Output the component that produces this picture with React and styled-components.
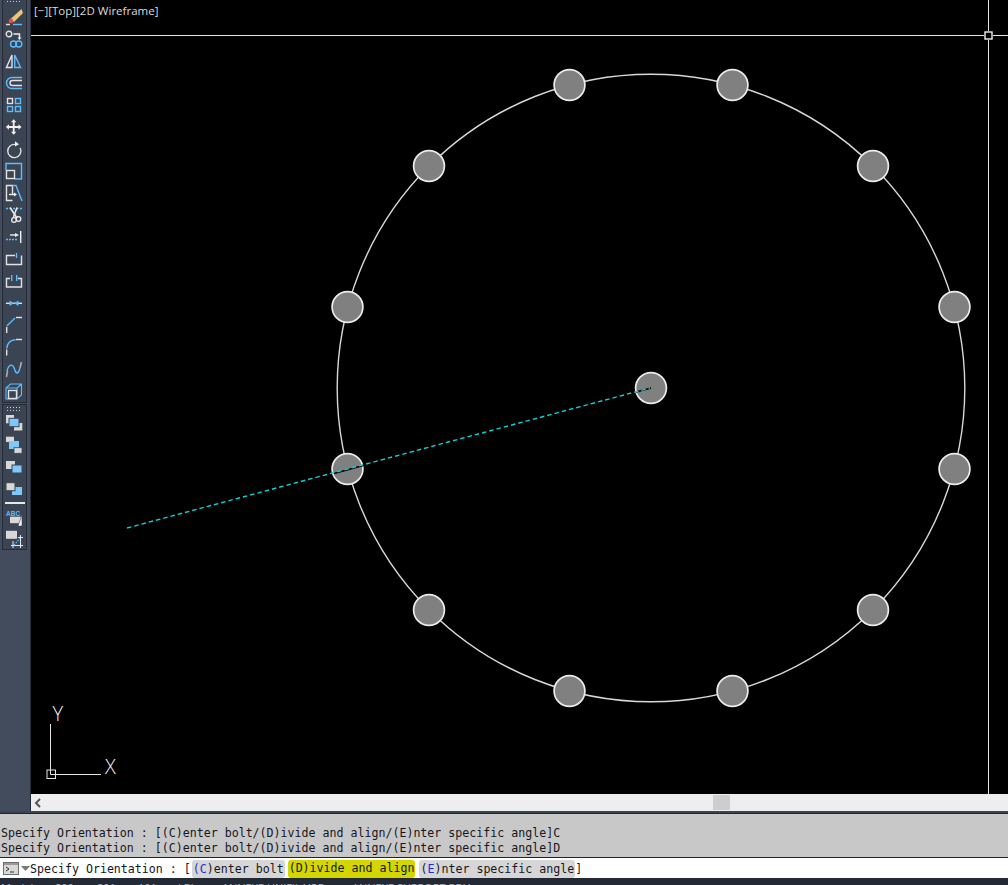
import React from 'react';
import styled, { createGlobalStyle } from 'styled-components';

const GlobalStyle = createGlobalStyle`
  html, body { margin: 0; padding: 0; background: #000; }
`;

const Page = styled.div`
  width: 1008px;
  height: 885px;
  overflow: hidden;
  display: flex;
  flex-direction: column;
  background: #232a35;
`;

const Workspace = styled.div`
  display: flex;
  height: 811px;
`;

const ToolColumn = styled.div`
  width: 31px;
  flex: none;
  box-sizing: border-box;
  padding-left: 2px;
  background: #434c5c;
  border-right: 1px solid #262c37;
  display: flex;
  flex-direction: column;
  gap: 1px;
`;

const ToolGroup = styled.div`
  width: 25px;
  box-sizing: border-box;
  background: #3b4453;
  border: 1px solid #262c37;
  border-top-width: ${p => (p.$open ? 0 : 1)}px;
  display: flex;
  flex-direction: column;
`;

const Grip = styled.div`
  height: ${p => p.$h}px;
  flex: none;
  margin: ${p => p.$top}px 4px 0 3px;
  background-image: radial-gradient(circle, #cfd3d8 0.8px, transparent 1px);
  background-size: 3px 3px;
  background-repeat: repeat;
  box-sizing: border-box;
`;

const ToolRow = styled.div`
  height: ${p => p.$h || 22}px;
  flex: none;
`;

const ToolSvg = styled.svg`
  display: block;
  width: 23px;
  height: 22px;
  fill: none;
`;

const ToolDivider = styled.div`
  height: 2px;
  flex: none;
  margin: 2px 1px 3px 2px;
  background: #e8e8e8;
`;

const CanvasColumn = styled.div`
  flex: 1;
  min-width: 0;
  display: flex;
  flex-direction: column;
`;

const Canvas = styled.div`
  position: relative;
  height: 794px;
  background: #000;
  overflow: hidden;
`;

const Drawing = styled.svg`
  display: block;
  width: 977px;
  height: 794px;
`;

const ViewLabel = styled.div`
  position: absolute;
  left: 3px;
  top: 3px;
  font: 11.5px/15px "Open Sans", "Noto Sans", sans-serif;
  color: #dcdcdc;
  letter-spacing: 0.02px;
`;

const AxisLabel = styled.text`
  font-family: "Open Sans", "Noto Sans", sans-serif;
  font-size: 20px;
  font-weight: 300;
  fill: #f0f0f0;
`;

const ScrollBar = styled.div`
  height: 17px;
  flex: none;
  display: flex;
  align-items: center;
  background: #eeeeee;
`;

const ScrollArrow = styled.svg`
  width: 8px;
  height: 10px;
  margin-left: 3px;
  flex: none;
`;

const ScrollThumb = styled.div`
  width: 17px;
  height: 15px;
  margin-left: 671px;
  background: #cdcdcd;
`;

const Stripe = styled.div`
  height: 3px;
  flex: none;
  background: #3b4453;
  border-bottom: 1px solid #1f2530;
  box-sizing: border-box;
`;

const monoText = `
  font-family: "DejaVu Sans Mono", "Liberation Mono", monospace;
  font-size: 11.62px;
  color: #16161c;
  white-space: pre;
`;

const History = styled.div`
  height: 43px;
  flex: none;
  box-sizing: border-box;
  padding: 12px 0 0 1px;
  background: #c8c8c8;
  ${monoText}
  line-height: 15px;
`;

const HistoryLine = styled.div``;

const PromptRow = styled.div`
  height: 21px;
  flex: none;
  box-sizing: border-box;
  border-top: 1px solid #20262f;
  background: #fff;
  display: flex;
  align-items: center;
  padding: 1px 0 0 3px;
  ${monoText}
`;

const TerminalIcon = styled.svg`
  width: 16px;
  height: 13px;
  flex: none;
  margin-right: 2px;
`;

const CaretIcon = styled.svg`
  width: 9px;
  height: 5px;
  flex: none;
`;

const Chip = styled.span`
  height: 18px;
  line-height: ${p => (p.$active ? 17 : 18)}px;
  align-self: ${p => (p.$active ? 'flex-end' : 'center')};
  margin: 0 ${p => p.$right}px 0 ${p => p.$left || 0}px;
  padding: 0 1px;
  border-radius: 3px;
  background: ${p => (p.$active ? '#d3d600' : '#d6d6d6')};
`;

const Key = styled.span`
  color: #1a2fd0;
`;

const StatusBar = styled.div`
  flex: 1;
  min-height: 0;
  overflow: hidden;
  display: flex;
  padding: 3px 0 0 1px;
  font: 11px/14px "Open Sans", "Noto Sans", sans-serif;
  color: #aeb4bd;
  white-space: nowrap;
`;

const StatusTab = styled.span`
  width: ${p => p.$w}px;
  flex: none;
`;

const grey = '#e2e2e2';
const blue = '#5cbcff';
const fillBlue = '#7ec8fb';
const fillGrey = '#d8d8d8';
const slate = '#3b4453';

const ToolIcon = ({ children }) => (
  <ToolSvg viewBox="0 0 23 22" strokeWidth="1.4">{children}</ToolSvg>
);

const modifyIcons = [
  // erase
  <>
    <path d="M18.5 3 L20 7 L11 16 L7.5 13 Z" fill="#e8c67e" />
    <circle cx="8" cy="15" r="2.3" fill="#e2504f" />
    <path d="M3 18.5H7" stroke={grey} />
    <path d="M10 18.5H19" stroke={blue} />
  </>,
  // copy
  <>
    <circle cx="6" cy="6" r="2.8" stroke={grey} />
    <path d="M10.5 6H16.5V10" stroke="#eee" />
    <path d="M14.5 9.5H18.5L16.5 12Z" fill="#eee" />
    <circle cx="10.5" cy="16" r="3" stroke={blue} />
    <circle cx="15.8" cy="16" r="3" stroke={blue} />
  </>,
  // mirror
  <>
    <path d="M9 5V17.5H3.4Z" stroke={grey} />
    <path d="M11.7 5V17.5H17.6Z" stroke={blue} />
  </>,
  // offset
  <>
    <path d="M19 5.5H9A5.5 5.5 0 0 0 9 16.5H19" stroke={blue} />
    <path d="M19 8.5H9.5A2.5 2.5 0 0 0 9.5 13.5H19" stroke={grey} />
  </>,
  // array
  <>
    <rect x="4.5" y="4.5" width="5" height="5" stroke={grey} />
    <rect x="12.5" y="4.5" width="5" height="5" stroke={blue} />
    <rect x="4.5" y="12.5" width="5" height="5" stroke={blue} />
    <rect x="12.5" y="12.5" width="5" height="5" stroke={blue} />
  </>,
  // move
  <path
    d="M10.7 3.2L13.4 6.2H11.6V10.1H15.5V8.3L18.5 11L15.5 13.7V11.9H11.6V15.8H13.4L10.7 18.8L8 15.8H9.8V11.9H5.9V13.7L2.9 11L5.9 8.3V10.1H9.8V6.2H8Z"
    fill="#f0f0f0"
  />,
  // rotate
  <>
    <path d="M13 6.6A6.6 6.6 0 1 0 17.2 10" stroke={grey} strokeWidth="1.4" />
    <path d="M12 3.2L16 6.2L12 8.4Z" fill="#eee" />
  </>,
  // scale
  <>
    <path d="M3 10V3.5H18.5V19H11.5" stroke={blue} />
    <rect x="3.5" y="10.5" width="8" height="8" stroke={grey} />
  </>,
  // stretch
  <>
    <path d="M9.5 12V3.5H3.5V18.5H9.5" stroke={grey} />
    <path d="M6 12.5H13" stroke="#eee" />
    <path d="M11 10.5L14 12.5L11 14.5Z" fill="#eee" />
    <path d="M9.5 3.5H13L19 19" stroke={blue} />
  </>,
  // trim
  <>
    <path d="M3 4.5H19" stroke={blue} strokeDasharray="2 1.5" />
    <path d="M7 3.5L14 14" stroke="#eee" strokeWidth="1.5" />
    <path d="M14 3.5L10.5 13" stroke="#eee" strokeWidth="1.5" />
    <circle cx="11" cy="16" r="2.3" stroke="#eee" strokeWidth="1.3" />
    <circle cx="15.5" cy="15" r="2.3" stroke="#eee" strokeWidth="1.3" />
  </>,
  // extend
  <>
    <path d="M17.7 5V17" stroke="#eee" />
    <path d="M7 9H13" stroke="#eee" />
    <path d="M12 7L16 9L12 11Z" fill="#eee" />
    <path d="M3 13.5H15" stroke={blue} strokeDasharray="2 1" />
  </>,
  // break at point
  <>
    <path d="M12 7.5H3.5V16.5H18.5V7.5" stroke={grey} />
    <path d="M13.5 5V10" stroke={blue} />
  </>,
  // break
  <>
    <path d="M7 8.5H3.5V17H18.5V8.5H15" stroke={grey} />
    <path d="M8.7 5V11M13.7 5V11" stroke={blue} />
  </>,
  // join
  <>
    <path d="M3 11.3H19" stroke={grey} />
    <path d="M6.5 8.6L11 11.3L6.5 14ZM15.5 8.6L11 11.3L15.5 14Z" fill={blue} />
  </>,
  // chamfer
  <>
    <path d="M13 3.5H19" stroke={grey} />
    <path d="M12 4L3.8 12" stroke={blue} />
    <path d="M3.7 13V19" stroke={grey} />
  </>,
  // fillet
  <>
    <path d="M13 3.5H19" stroke={grey} />
    <path d="M12.5 3.8C7.5 3.8 3.8 7.5 3.8 12.5" stroke={blue} />
    <path d="M3.7 13.5V19.5" stroke={grey} />
  </>,
  // blend curves
  <>
    <path d="M4 13C6 5 10 6 11.5 11S15 17 17 10" stroke={blue} />
    <path d="M17 10L18.4 4" stroke="#a9adb2" strokeWidth="1.6" />
    <path d="M3.5 19L4.5 13" stroke="#a9adb2" strokeWidth="1.6" />
  </>,
  // explode
  <>
    <path d="M3 8L7.5 4H18.5V15L14 19H3ZM3 8H14V19M14 8L18.5 4" stroke={blue} strokeWidth="1.1" />
    <rect x="5.5" y="10.5" width="8" height="8" stroke={grey} strokeWidth="1.4" />
  </>,
];

const orderIcons = [
  <>
    <rect x="3" y="3" width="8" height="8.3" fill={fillGrey} />
    <rect x="11" y="11" width="8.3" height="7.5" fill={fillGrey} />
    <rect x="6" y="6.3" width="10" height="8.4" fill={fillBlue} stroke={slate} strokeWidth="1" />
  </>,
  <>
    <rect x="3" y="2.7" width="8" height="5.3" fill={fillGrey} />
    <rect x="6" y="7" width="10" height="8" fill={fillBlue} />
    <rect x="11" y="13.7" width="8" height="5.6" fill={fillGrey} stroke={slate} strokeWidth="0.8" />
  </>,
  <>
    <rect x="3" y="5" width="9" height="8" fill={fillGrey} />
    <rect x="9" y="9" width="10" height="8" fill={fillBlue} stroke={slate} strokeWidth="1" />
  </>,
  <>
    <rect x="9" y="9" width="10" height="8" fill={fillBlue} />
    <rect x="3" y="4.7" width="9" height="8" fill={fillGrey} stroke={slate} strokeWidth="1" />
  </>,
];

const annotationIcons = [
  <>
    <text x="3" y="9" fontFamily="Liberation Sans, sans-serif" fontSize="6.5" fontWeight="700" fill={blue}>ABC</text>
    <rect x="7" y="9.7" width="12" height="6.5" fill={fillGrey} />
    <path d="M19 8V19H15Z" fill="#fff" stroke={slate} strokeWidth="0.6" />
  </>,
  <>
    <rect x="3" y="2.8" width="11" height="8" fill={fillGrey} />
    <path d="M8 17.5H20M17.5 7V20M10 13V20M15 9.5H20" stroke="#e8e8e8" strokeWidth="1" />
    <path d="M11 17L17 10.5" stroke={blue} strokeWidth="1.2" strokeDasharray="1.6 1" />
  </>,
];

// bolt hole centres, in page coordinates
const holes = [
  [569.5, 85], [732.5, 85], [429, 166], [873, 166],
  [347.5, 307], [954.5, 307], [347.5, 469], [954.5, 469],
  [429, 610], [873, 610], [569.5, 691], [732.5, 691],
  [651, 388],
];

const BoltPlan = () => (
  <Drawing viewBox="31 0 977 794">
    <circle cx="651" cy="388" r="313.8" fill="none" stroke="#d8d8d8" strokeWidth="1.4" />
    {holes.map(([x, y]) => (
      <circle key={`${x}-${y}`} cx={x} cy={y} r="15.4" fill="#808080" stroke="#ececec" strokeWidth="1.7" />
    ))}
    <path d="M334 473.5L365 465M636 392L651 388" stroke="#000" strokeWidth="1.4" />
    <path d="M127 528L650 388" stroke="#10d0d0" strokeWidth="1.4" strokeDasharray="4.5 3" />

    <path d="M31 35.5H984M993 35.5H1008M988.5 0V31M988.5 40V794" stroke="#e4e4e4" strokeWidth="1" />
    <rect x="985" y="32" width="7" height="7" fill="none" stroke="#f0f0f0" strokeWidth="1.4" />

    <path d="M50.5 724V774.5H101" fill="none" stroke="#e4e4e4" strokeWidth="1" />
    <rect x="47" y="770" width="8.5" height="8.5" fill="none" stroke="#e4e4e4" strokeWidth="1" />
    <AxisLabel x="105" y="773.5">X</AxisLabel>
    <AxisLabel x="52.5" y="721">Y</AxisLabel>
  </Drawing>
);

export default function App() {
  return (
    <Page>
      <GlobalStyle />
      <Workspace>
        <ToolColumn>
          <ToolGroup $open>
            <Grip $h={3} $top={0} />
            <ToolRow $h={3} />
            {modifyIcons.map((icon, i) => (
              <ToolRow key={i}><ToolIcon>{icon}</ToolIcon></ToolRow>
            ))}
          </ToolGroup>
          <ToolGroup>
            <Grip $h={6} $top={1} />
            {orderIcons.map((icon, i) => (
              <ToolRow key={i}><ToolIcon>{icon}</ToolIcon></ToolRow>
            ))}
            <ToolDivider />
            {annotationIcons.map((icon, i) => (
              <ToolRow key={i} $h={21}><ToolIcon>{icon}</ToolIcon></ToolRow>
            ))}
          </ToolGroup>
        </ToolColumn>
        <CanvasColumn>
          <Canvas>
            <BoltPlan />
            <ViewLabel>[−][Top][2D Wireframe]</ViewLabel>
          </Canvas>
          <ScrollBar>
            <ScrollArrow viewBox="0 0 8 10">
              <path d="M6 1L2 5L6 9" fill="none" stroke="#555" strokeWidth="2" />
            </ScrollArrow>
            <ScrollThumb />
          </ScrollBar>
        </CanvasColumn>
      </Workspace>
      <Stripe />
      <History>
        <HistoryLine>Specify Orientation : [(C)enter bolt/(D)ivide and align/(E)nter specific angle]C</HistoryLine>
        <HistoryLine>Specify Orientation : [(C)enter bolt/(D)ivide and align/(E)nter specific angle]D</HistoryLine>
      </History>
      <PromptRow>
        <TerminalIcon viewBox="0 0 16 13">
          <rect x="0.5" y="0.5" width="15" height="12" fill="#d8d8d8" stroke="#6f6f6f" />
          <path d="M1 1H15V3H1Z" fill="#9a9a9a" />
          <path d="M3 5L6 7L3 9M7 10H11" fill="none" stroke="#333" strokeWidth="1" />
        </TerminalIcon>
        <CaretIcon viewBox="0 0 9 5">
          <path d="M0 0H9L4.5 5Z" fill="#7a7a7a" />
        </CaretIcon>
        Specify Orientation : [
        <Chip $left={1} $right={3}><Key>(C</Key>)enter bolt</Chip>
        <Chip $active $right={4}>(D)ivide and align</Chip>
        <Chip $right={0}>(<Key>E</Key>)nter specific angle</Chip>
        ]
      </PromptRow>
      <StatusBar>
        <StatusTab $w={54}>Model</StatusTab>
        <StatusTab $w={42}>800</StatusTab>
        <StatusTab $w={41}>801</StatusTab>
        <StatusTab $w={40}>101</StatusTab>
        <StatusTab $w={44}>LBL</StatusTab>
        <StatusTab $w={130}>ANNEXE UNIFILAIRE</StatusTab>
        <StatusTab $w={148}>ANNEXE SUPPORT BRH</StatusTab>
        <StatusTab $w={20}>+</StatusTab>
      </StatusBar>
    </Page>
  );
}
